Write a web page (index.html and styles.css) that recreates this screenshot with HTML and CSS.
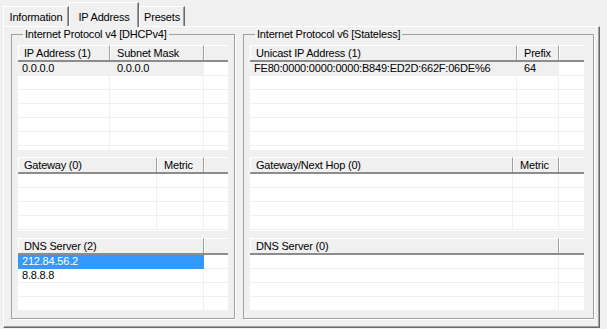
FILE: index.html
```html
<!DOCTYPE html>
<html>

<head>
    <title>IP Address</title>
    <link rel="stylesheet" href="styles.css">
</head>

<body>
    <div class="tabs">
        <div class="tab tab-info">Information</div>
        <div class="tab tab-ip active">IP Address</div>
        <div class="tab tab-presets">Presets</div>
    </div>
    <div class="panel">
        <fieldset class="group group-v4">
            <legend>Internet Protocol v4 [DHCPv4]</legend>
            <div class="list list-top">
                <div class="head cols-ip4"><span>IP Address (1)</span><span>Subnet Mask</span><span class="fill"></span></div>
                <div class="row cols-ip4 dim"><span>0.0.0.0</span><span>0.0.0.0</span><span class="fill"></span></div>
                <div class="row cols-ip4"><span></span><span></span><span class="fill"></span></div>
                <div class="row cols-ip4"><span></span><span></span><span class="fill"></span></div>
                <div class="row cols-ip4"><span></span><span></span><span class="fill"></span></div>
                <div class="row cols-ip4"><span></span><span></span><span class="fill"></span></div>
                <div class="row cols-ip4"><span></span><span></span><span class="fill"></span></div>
                <div class="row cols-ip4"><span></span><span></span><span class="fill"></span></div>
            </div>
            <div class="list list-mid">
                <div class="head cols-gw4"><span>Gateway (0)</span><span>Metric</span><span class="fill"></span></div>
                <div class="row cols-gw4"><span></span><span></span><span class="fill"></span></div>
                <div class="row cols-gw4"><span></span><span></span><span class="fill"></span></div>
                <div class="row cols-gw4"><span></span><span></span><span class="fill"></span></div>
                <div class="row cols-gw4"><span></span><span></span><span class="fill"></span></div>
            </div>
            <div class="list list-bottom">
                <div class="head cols-dns4"><span>DNS Server (2)</span><span class="fill"></span></div>
                <div class="row cols-dns4 sel"><span>212.84.56.2</span><span class="fill"></span></div>
                <div class="row cols-dns4"><span>8.8.8.8</span><span class="fill"></span></div>
                <div class="row cols-dns4"><span></span><span class="fill"></span></div>
                <div class="row cols-dns4"><span></span><span class="fill"></span></div>
            </div>
        </fieldset>
        <fieldset class="group group-v6">
            <legend>Internet Protocol v6 [Stateless]</legend>
            <div class="list list-top">
                <div class="head cols-ip6"><span>Unicast IP Address (1)</span><span>Prefix</span><span class="fill"></span></div>
                <div class="row cols-ip6 dim"><span>FE80:0000:0000:0000:B849:ED2D:662F:06DE%6</span><span>64</span><span class="fill"></span></div>
                <div class="row cols-ip6"><span></span><span></span><span class="fill"></span></div>
                <div class="row cols-ip6"><span></span><span></span><span class="fill"></span></div>
                <div class="row cols-ip6"><span></span><span></span><span class="fill"></span></div>
                <div class="row cols-ip6"><span></span><span></span><span class="fill"></span></div>
                <div class="row cols-ip6"><span></span><span></span><span class="fill"></span></div>
                <div class="row cols-ip6"><span></span><span></span><span class="fill"></span></div>
            </div>
            <div class="list list-mid">
                <div class="head cols-gw6"><span>Gateway/Next Hop (0)</span><span>Metric</span><span class="fill"></span></div>
                <div class="row cols-gw6"><span></span><span></span><span class="fill"></span></div>
                <div class="row cols-gw6"><span></span><span></span><span class="fill"></span></div>
                <div class="row cols-gw6"><span></span><span></span><span class="fill"></span></div>
                <div class="row cols-gw6"><span></span><span></span><span class="fill"></span></div>
            </div>
            <div class="list list-bottom">
                <div class="head cols-dns6"><span>DNS Server (0)</span><span class="fill"></span></div>
                <div class="row cols-dns6"><span></span><span class="fill"></span></div>
                <div class="row cols-dns6"><span></span><span class="fill"></span></div>
                <div class="row cols-dns6"><span></span><span class="fill"></span></div>
                <div class="row cols-dns6"><span></span><span class="fill"></span></div>
            </div>
        </fieldset>
    </div>
</body>

</html>
```

FILE: styles.css
```css
body {
    margin: 0;
    width: 607px;
    height: 329px;
    overflow: hidden;
    background-color: #f0f0f0;
    font-family: "Liberation Sans", Arial, sans-serif;
    font-size: 11px;
    letter-spacing: -0.2px;
    color: #000;
}

/* tab strip */
.tabs {
    display: flex;
    align-items: flex-end;
    height: 26px;
    padding-left: 3px;
}

.tab {
    box-sizing: border-box;
    height: 20px;
    display: flex;
    align-items: center;
    justify-content: center;
    padding-top: 1px;
    border-top: 1px solid #fff;
    border-left: 1px solid #fff;
    border-right: 1px solid #696969;
    box-shadow: inset -1px 0 #a0a0a0;
    background-color: #f0f0f0;
}

.tab-info {
    width: 66px;
}

.tab-ip {
    width: 70px;
}

.tab-presets {
    width: 46px;
}

.tab.active {
    position: relative;
    z-index: 1;
    height: 25px;
    margin-bottom: -1px;
    padding-top: 3px;
}

/* tab page */
.panel {
    box-sizing: border-box;
    width: 597px;
    height: 302px;
    margin-left: 3px;
    display: flex;
    align-items: flex-start;
    gap: 8px;
    padding: 1px 0 0 7px;
    border-top: 1px solid #fff;
    border-left: 1px solid #fff;
    border-right: 1px solid #696969;
    border-bottom: 1px solid #696969;
    box-shadow: inset -1px -1px #a0a0a0;
}

.group {
    box-sizing: border-box;
    margin: 0;
    min-width: 0;
    height: 291px;
    padding: 4px 6px 8px 6px;
    border: 1px solid #a0a0a0;
    box-shadow: 1px 1px 0 #fff;
    display: flex;
    flex-direction: column;
    gap: 7px;
}

.group-v4 {
    width: 224px;
}

.group-v6 {
    width: 351px;
}

.group legend {
    padding: 0 2px;
    margin-left: 5px;
    line-height: 13px;
}

/* list views */
.list {
    background-color: #fff;
    overflow: hidden;
    flex: none;
}

.group-v4 .list {
    width: 210px;
}

.group-v6 .list {
    width: 334px;
}

.list-top {
    height: 105px;
}

.list-mid {
    height: 74px;
}

.list-bottom {
    height: 72px;
}

.head,
.row {
    display: grid;
}

.cols-ip4 {
    grid-template-columns: 92px 94px 1fr;
}

.cols-gw4 {
    grid-template-columns: 139px 47px 1fr;
}

.cols-dns4 {
    grid-template-columns: 186px 1fr;
}

.cols-ip6 {
    grid-template-columns: 267px 42px 1fr;
}

.cols-gw6 {
    grid-template-columns: 263px 46px 1fr;
}

.cols-dns6 {
    grid-template-columns: 309px 1fr;
}

.head {
    box-sizing: border-box;
    height: 17px;
    background-color: #f0f0f0;
    border-bottom: 2px solid #8c8c8c;
}

.head span {
    box-sizing: border-box;
    padding-left: 6px;
    line-height: 14px;
    border-top: 1px solid #fff;
    border-left: 1px solid #fff;
    border-right: 1px solid #a0a0a0;
    white-space: nowrap;
    overflow: hidden;
}

.head span:first-child {
    padding-left: 5px;
}

.head span.fill {
    border-right: 0;
}

.row {
    height: 14px;
}

.row span {
    box-sizing: border-box;
    padding-left: 7px;
    line-height: 13px;
    border-right: 1px solid #f0f0f0;
    border-bottom: 1px solid #f0f0f0;
    white-space: nowrap;
    overflow: hidden;
}

.row span:first-child {
    padding-left: 4px;
}

.row span.fill {
    border-right: 0;
}

.row.dim span:not(.fill) {
    background-color: #f0f0f0;
}

.row.sel span:not(.fill) {
    background-color: #3399ff;
    border-color: #3399ff;
    color: #fff;
}
```
